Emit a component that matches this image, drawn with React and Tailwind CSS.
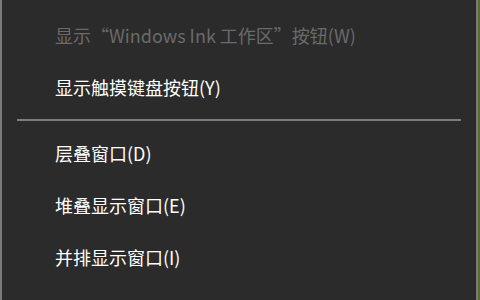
import React from 'react';

const items = [
    { label: '层叠窗口(D)' },
    { label: '堆叠显示窗口(E)' },
    { label: '并排显示窗口(I)' },
    { label: '显示桌面(S)' },
];

function Row({ label, disabled }) {
    return (
        <div className={`h-[52px] flex items-center pl-[53px] text-[18px] ${disabled ? 'text-[#6a6a6a]' : 'text-white'}`}>
            {label}
        </div>
    );
}

export default function App() {
    return (
        <div className="w-[480px] h-[300px] overflow-hidden flex bg-[#55702f]" style={{ fontFamily: '"Noto Sans CJK SC", "Noto Sans", sans-serif' }}>
            <div className="w-[478px] h-[300px] bg-[#2b2b2b] border-l-2 border-r-2 border-[#7a7a7a] pt-[9px]">
                <Row label="显示“Windows Ink 工作区”按钮(W)" disabled />
                <Row label="显示触摸键盘按钮(Y)" />
                <div className="h-[14px] flex items-center pl-[15px] pr-[15px]">
                    <div className="h-[2px] w-full bg-[#7d7d7d]" />
                </div>
                {items.map(item => (
                    <Row key={item.label} label={item.label} />
                ))}
            </div>
        </div>
    );
}
